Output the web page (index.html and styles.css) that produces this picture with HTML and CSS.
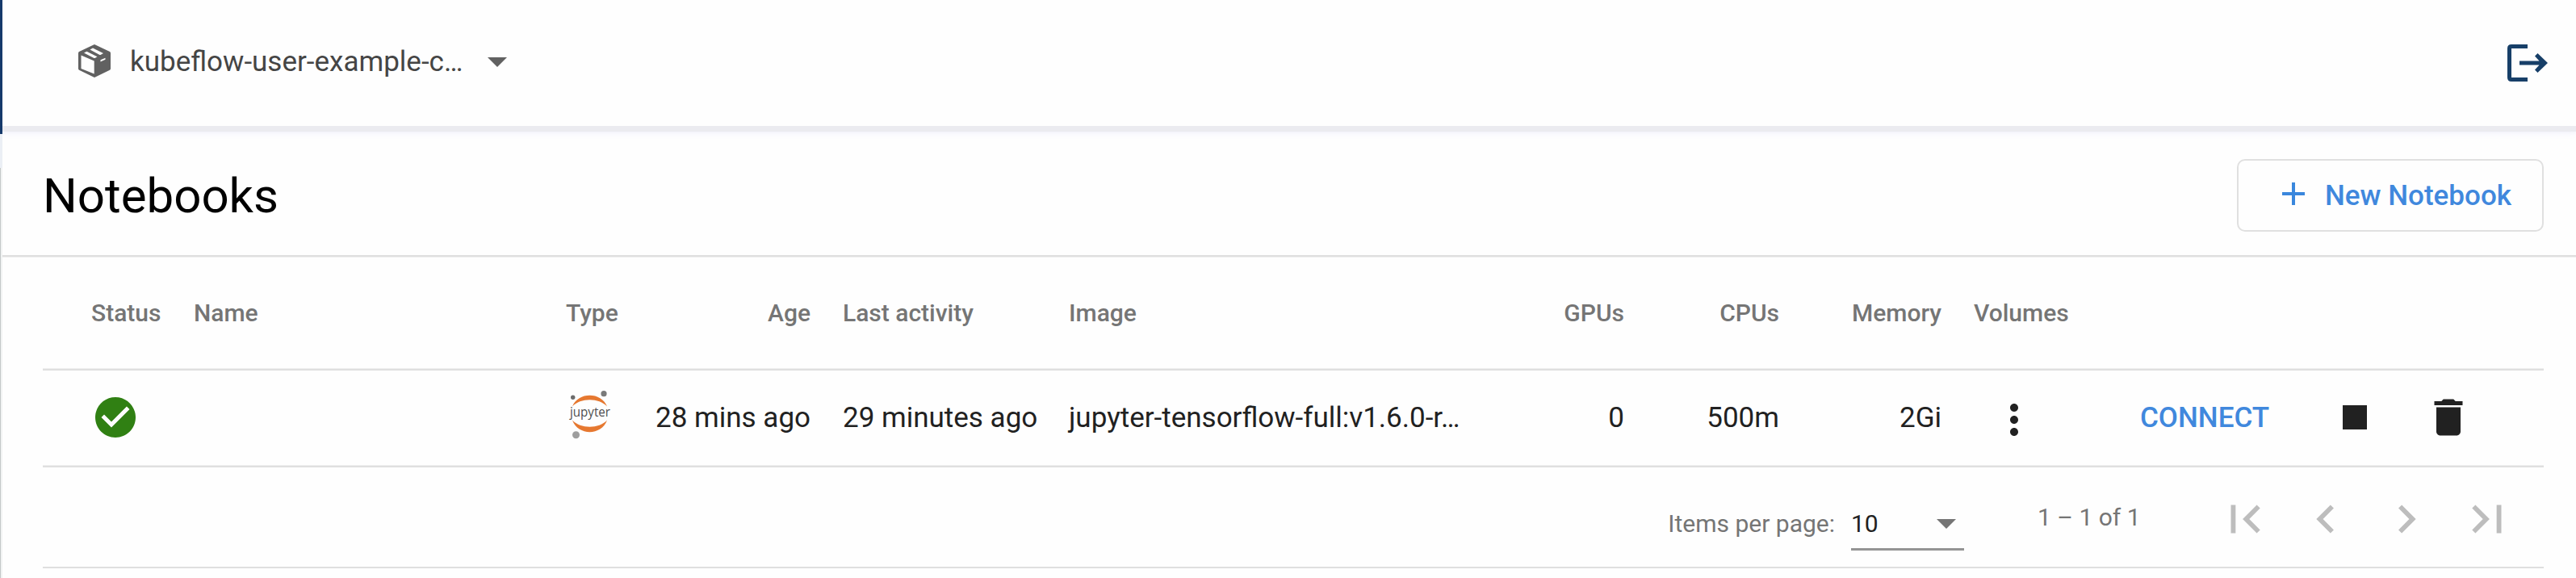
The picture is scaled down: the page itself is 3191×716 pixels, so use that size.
FILE: index.html
```html
<!DOCTYPE html>
<html lang="en">
<head>
<meta charset="utf-8">
<title>Notebooks</title>
<link rel="stylesheet" href="styles.css">
</head>
<body>
<div class="app">
  <aside class="rail"><div class="rail-brand"></div><div class="rail-item"></div><div class="rail-rest"></div></aside>
  <main class="main">
    <header class="topbar">
      <div class="namespace">
        <svg class="package" viewBox="0 0 40 41"><path fill="#616161" fill-rule="evenodd" d="M20 0 39 9Q40 9.500 40 11V30Q40 31 39 31.700L20 41 1 31.700Q0 31 0 30V11Q0 9.500 1 9ZM3.500 13.500V30L19.700 36.500V20.500ZM7 10.500 19 16.800Q20 17.200 21 16.800L23.500 15.200 10.500 8.700ZM14.500 6.500 26 12.800Q27 13.200 28 12.800L31 11 18 4.500ZM27.500 19.300V21.500L33.500 18.800V16.700Z"/></svg>
        <span class="namespace-name">kubeflow-user-example-c…</span>
        <span class="caret"></span>
      </div>
      <svg class="logout" viewBox="0 0 50 46"><path fill="#173f68" d="M25 0V5H5V41H25V46H5Q0 46 0 41V5Q0 0 5 0ZM15 20.500H39.500L34 14.500 37.500 11 50 23 37.500 35 34 31.500 39.500 25.500H15Z"/></svg>
    </header>
    <section class="titlebar">
      <h1 class="title">Notebooks</h1>
      <button class="new-button"><svg class="plus" viewBox="0 0 28 28"><path fill="#3a87dd" d="M12 0h4v12h12v4H16v12h-4V16H0v-4h12z"/></svg><span>New Notebook</span></button>
    </section>
    <section class="content">
      <div class="row head">
        <span>Status</span><span>Name</span><span>Type</span><span class="num">Age</span><span class="indent">Last activity</span><span>Image</span><span class="num">GPUs</span><span class="num">CPUs</span><span class="num">Memory</span><span class="indent">Volumes</span><span></span>
      </div>
      <div class="row body">
        <span class="status"><svg class="icon" viewBox="0 0 24 24"><path fill="#308013" d="M12 2C6.480 2 2 6.480 2 12s4.480 10 10 10 10-4.480 10-10S17.520 2 12 2zm-2 15l-5-5 1.410-1.410L10 14.170l7.590-7.590L19 8l-9 9z"/></svg></span>
        <span></span>
        <span class="type"><svg class="jupyter" viewBox="0 0 50 60">
          <path fill="#e67830" d="M3 19.500C10 1 39 1 46 19.500C36 8.500 13 8.500 3 19.500ZM3 36.500C13 47.500 36 47.500 46 36.500C39 56 10 56 3 36.500Z"/>
          <circle fill="#6c6c6c" cx="3.700" cy="8.200" r="2.700"/><circle fill="#7a7a7a" cx="42" cy="3.700" r="3.600"/><circle fill="#9e9e9e" cx="7.500" cy="54.700" r="4.500"/>
          <text x="0" y="32" textLength="50" lengthAdjust="spacingAndGlyphs" class="jupyter-text">jupyter</text></svg></span>
        <span class="num">28 mins ago</span><span class="indent">29 minutes ago</span><span>jupyter-tensorflow-full:v1.6.0-r…</span><span class="num">0</span><span class="num">500m</span><span class="num">2Gi</span>
        <span class="menu"><svg class="icon" viewBox="0 0 24 24"><path fill="#212121" d="M12 8c1.100 0 2-.9 2-2s-.9-2-2-2-2 .9-2 2 .9 2 2 2zm0 2c-1.100 0-2 .9-2 2s.9 2 2 2 2-.9 2-2-.9-2-2-2zm0 6c-1.100 0-2 .9-2 2s.9 2 2 2 2-.9 2-2-.9-2-2-2z"/></svg></span>
        <span class="actions"><b class="connect">CONNECT</b><svg class="icon" viewBox="0 0 24 24"><path fill="#212121" d="M6 6h12v12H6z"/></svg><svg class="icon" viewBox="0 0 24 24"><path fill="#212121" d="M6 19c0 1.100.9 2 2 2h8c1.100 0 2-.9 2-2V7H6v12zM19 4h-3.500l-1-1h-5l-1 1H5v2h14V4z"/></svg></span>
      </div>
      <div class="paginator">
        <span class="per-page">Items per page:</span>
        <span class="select"><span>10</span><span class="caret select-caret"></span></span>
        <span class="range">1 – 1 of 1</span>
        <span class="pages">
          <svg viewBox="0 0 24 24"><path d="M18.410 16.590L13.820 12l4.590-4.590L17 6l-6 6 6 6zM6 6h2v12H6z"/></svg>
          <svg viewBox="0 0 24 24"><path d="M15.410 7.410L14 6l-6 6 6 6 1.410-1.410L10.830 12z"/></svg>
          <svg viewBox="0 0 24 24"><path d="M10 6L8.590 7.410 13.170 12l-4.580 4.590L10 18l6-6z"/></svg>
          <svg viewBox="0 0 24 24"><path d="M5.590 7.410L10.180 12l-4.590 4.590L7 18l6-6-6-6zM16 6h2v12h-2z"/></svg>
        </span>
      </div>
    </section>
  </main>
</div>
</body>
</html>
```
FILE: styles.css
```css
* { box-sizing: border-box; }
body { margin: 0; background: #fefefe; font-family: Roboto, sans-serif; font-size: 35px; color: #212121; }
svg { display: block; flex: none; }
.app { display: flex; height: 716px; overflow: hidden; }
.rail { flex: none; width: 3px; display: flex; flex-direction: column; }
.rail-brand { height: 166px; background: #163a6b; }
.rail-item { height: 42px; background: #ebeff5; }
.rail-rest { flex: 1; background: #f1f3f3; border-left: 1px solid #c4c8c8; }
.main { flex: 1; min-width: 0; }
.topbar { height: 156px; display: flex; justify-content: space-between; padding: 55px 35px 0 94px; box-shadow: 0 7px 0 #ebebf0, 0 9px 3px #f4f4fb, 0 11px 9px #f9f9fe; clip-path: inset(0 0 -30px 0); }
.namespace { display: flex; height: 41px; align-items: center; }
.package { width: 40px; height: 41px; }
.namespace-name { width: 412px; margin: 0 31px 0 24px; padding-top: 2px; line-height: 41px; white-space: nowrap; color: #454545; }
.caret { margin-top: 2px; border: 12.500px solid transparent; border-top-color: #616161; border-bottom: 0; }
.logout { width: 50px; height: 46px; }
.titlebar { height: 163px; padding: 41px 40px 0 50px; display: flex; justify-content: space-between; border-bottom: 2px solid #dfdfdf; box-shadow: 0 1px #efefef; height: 162px; margin-bottom: 1px; }
.title { margin: 0; font-size: 60px; font-weight: 400; line-height: 92px; color: #000; }
.new-button { width: 380px; height: 90px; padding: 0 0 0 54px; border: 2px solid #e0e0e0; border-radius: 10px; background: #fefefe; display: flex; align-items: center; gap: 25px; font: 500 35px Roboto, sans-serif; color: #4088dd; }
.plus { width: 28px; height: 28px; margin-top: -4px; }
.content { padding: 0 40px 0 50px; }
.row { display: grid; grid-template-columns: 127px 461px 79px 224px 320px 558px 130px 192px 201px 246px 1fr; padding-left: 60px; align-items: center; border-bottom: 2px solid #dfdfdf; box-shadow: inset 0 -1px #efefef; white-space: nowrap; }
.head { height: 140px; padding-bottom: 2px; font-size: 30px; font-weight: 500; color: #757575; }
.body { height: 120px; padding-bottom: 2px; }
.num { text-align: right; }
.indent { padding-left: 40px; }
.icon { width: 60px; height: 60px; }
.jupyter { width: 50px; height: 60px; margin: -6px 0 0 5px; overflow: visible; }
.jupyter-text { font: 15.500px "Open Sans", sans-serif; fill: #4e4e4e; }
.menu { padding: 6px 0 0 60px; }
.actions { display: flex; align-items: center; }
.connect { width: 236px; font-weight: 500; color: #4088dd; }
.actions .icon + .icon { margin-left: 56px; }
.paginator { height: 125px; display: flex; justify-content: flex-end; align-items: flex-start; padding-right: 35px; border-bottom: 2px solid #dfdfdf; font-size: 30px; line-height: 36px; color: #757575; }
.per-page { margin: 52px 20px 0 0; }
.select { width: 140px; height: 54px; margin: 49px 91px 0 0; padding: 3px 10px 0 0; display: flex; justify-content: space-between; border-bottom: 3px solid #949494; color: #212121; }
.select-caret { align-self: flex-start; margin-top: 12px; border-top-color: #757575; }
.range { margin-top: 44px; width: 222px; }
.pages { display: flex; gap: 30px; margin-top: 29px; }
.pages svg { width: 70px; height: 70px; fill: #bdbdbd; }
```
